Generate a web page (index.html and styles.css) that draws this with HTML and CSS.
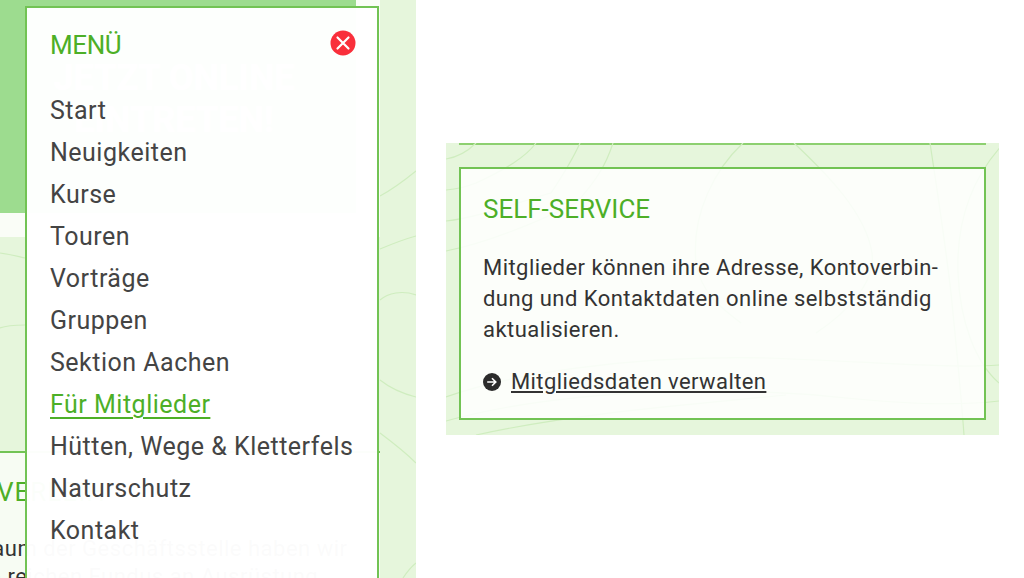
FILE: index.html
```html
<!DOCTYPE html>
<html lang="de">
<head>
    <meta charset="UTF-8">
    <meta name="viewport" content="width=device-width, initial-scale=1.0">
    <title>Self-Service</title>
    <link rel="stylesheet" href="styles.css">
</head>
<body>
    <div class="stage">
        <div class="left">
            <svg class="contours" viewBox="0 0 416 578" preserveAspectRatio="none" aria-hidden="true">
                <path d="M380 196C395 188 405 180 416 171"/>
                <path d="M380 249C392 244 405 239 416 236"/>
                <path d="M380 300C388 293 402 290 416 295"/>
                <path d="M380 380C390 388 404 394 416 397"/>
                <path d="M380 433C392 442 405 452 416 463"/>
                <path d="M403 578C407 572 411 567 416 563"/>
                <path d="M0 253C8 254 16 256 25 258"/>
                <path d="M0 328C5 326 12 325 25 325"/>
            </svg>
            <div class="hero-row">
                <div class="hero">
                    <p class="hero-text">JETZT ONLINE<br>EINTRETEN!</p>
                </div>
            </div>
            <div class="verleih">
                <h2 class="verleih-title">VERLEIH</h2>
                <p class="verleih-text">Im Raum der Geschäftsstelle haben wir<br>einen reichen Fundus an Ausrüstung</p>
            </div>
            <nav class="menu">
                <div class="menu-head">
                    <span class="menu-title">MENÜ</span>
                    <svg class="close" viewBox="0 0 26 26" aria-hidden="true">
                        <circle cx="13" cy="13" r="12.5" fill="#f92f3b"/>
                        <path d="M7.5 7.5l11 11M18.5 7.5l-11 11" stroke="#fff" stroke-width="2.2" stroke-linecap="round"/>
                    </svg>
                </div>
                <a href="#">Start</a>
                <a href="#">Neuigkeiten</a>
                <a href="#">Kurse</a>
                <a href="#">Touren</a>
                <a href="#">Vorträge</a>
                <a href="#">Gruppen</a>
                <a href="#">Sektion Aachen</a>
                <a href="#" class="active">Für Mitglieder</a>
                <a href="#">Hütten, Wege &amp; Kletterfels</a>
                <a href="#">Naturschutz</a>
                <a href="#">Kontakt</a>
            </nav>
        </div>

        <div class="right">
            <svg class="contours" viewBox="0 0 553 292" preserveAspectRatio="none" aria-hidden="true">
                <path d="M0 16C12 14 22 8 30 0"/>
                <path d="M90 0C80 14 60 26 30 40C20 44 10 46 0 47"/>
                <path d="M134 0C125 20 115 35 105 50C70 60 30 75 0 78"/>
                <path d="M167 0C160 22 150 38 130 60C90 80 40 100 0 108"/>
                <path d="M297 0C270 25 245 70 250 120C255 150 275 165 295 180"/>
                <path d="M348 0C380 30 420 70 426 110C430 140 400 170 370 190"/>
                <path d="M484 0C490 40 498 90 505 150C510 200 515 250 518 292"/>
                <path d="M558 0C530 30 510 70 512 130C514 180 530 220 553 240"/>
                <path d="M0 254C60 232 180 212 320 215C420 218 500 226 553 222"/>
                <path d="M0 278C100 250 260 240 400 255C470 262 520 262 553 258"/>
                <path d="M30 292C130 270 240 262 340 252"/>
            </svg>
            <section class="card">
                <h2 class="card-title">SELF-SERVICE</h2>
                <p class="card-text">Mitglieder können ihre Adresse, Kontoverbin-<br>dung und Kontaktdaten online selbstständig<br>aktualisieren.</p>
                <a href="#" class="card-link">
                    <svg class="arrow" viewBox="0 0 18 18" aria-hidden="true">
                        <circle cx="9" cy="9" r="9" fill="#2b2b2b"/>
                        <path d="M4.2 9h8.6M9 5.2L12.8 9 9 12.8" fill="none" stroke="#fff" stroke-width="1.6"/>
                    </svg>
                    <span>Mitgliedsdaten verwalten</span>
                </a>
            </section>
        </div>
    </div>
</body>
</html>
```

FILE: styles.css
```css
* {
    box-sizing: border-box;
}
html, body {
    margin: 0;
    height: 100%;
    overflow: hidden;
}
body {
    background-color: #fff;
    font-family: Roboto, "Liberation Sans", sans-serif;
    color: #333;
}
.stage {
    display: flex;
    height: 578px;
    overflow: hidden;
}
.contours {
    position: absolute;
    top: 0;
    left: 0;
    width: 100%;
    height: 100%;
    fill: none;
    stroke: #cfedbf;
    stroke-width: 1.2;
}

/* left page with open menu */
.left {
    position: relative;
    width: 416px;
    height: 578px;
    background-color: #e6f6dc;
    overflow: hidden;
}
.hero-row {
    position: relative;
    width: 380px;
    height: 237px;
    background-color: #fafdf7;
}
.hero {
    width: 356px;
    height: 213px;
    background-color: #9ddc8f;
    padding: 57px 8px 0 0;
}
.hero-text {
    margin: 0;
    font-size: 36px;
    line-height: 42px;
    font-weight: 700;
    color: #fff;
    text-align: center;
    white-space: nowrap;
}
.verleih {
    position: absolute;
    top: 451px;
    left: 0;
    width: 380px;
    height: 127px;
    border-top: 2px solid #72c354;
    background-color: #f7fcf3;
    padding-top: 24px;
    overflow: hidden;
}
.verleih-title {
    margin: 0 0 0 -3px;
    font-size: 26px;
    font-weight: 400;
    letter-spacing: 1px;
    color: #4daf27;
}
.verleih-text {
    margin: 28px 0 0 -54px;
    font-size: 22px;
    line-height: 28px;
    letter-spacing: .5px;
    white-space: nowrap;
}
.menu {
    position: absolute;
    top: 6px;
    left: 25px;
    width: 354px;
    height: 590px;
    border: 2px solid #72c354;
    background-color: rgba(255, 255, 255, .98);
    padding: 21px 24px 0 23px;
    display: flex;
    flex-direction: column;
}
.menu-head {
    display: flex;
    justify-content: space-between;
    align-items: center;
    height: 32px;
    margin-bottom: 29px;
    margin-right: -3px;
}
.menu-title {
    font-size: 26px;
    color: #4daf27;
    letter-spacing: -.4px;
}
.close {
    width: 26px;
    height: 26px;
    margin-bottom: 4px;
}
.menu a {
    font-size: 25px;
    line-height: 42px;
    letter-spacing: .5px;
    color: #444;
    text-decoration: none;
    white-space: nowrap;
}
.menu a.active {
    color: #4daf27;
    text-decoration: underline;
    text-decoration-thickness: 2px;
    text-underline-offset: 4px;
}

/* self service card */
.right {
    position: relative;
    width: 553px;
    height: 292px;
    margin: 143px 0 0 30px;
    background-color: #e6f6dc;
    padding: 24px 13px 15px;
}
.right::before {
    content: "";
    position: absolute;
    top: 0;
    left: 13px;
    width: 527px;
    height: 2px;
    background-color: #8dd070;
}
.card {
    position: relative;
    height: 253px;
    border: 2px solid #72c354;
    background-color: rgba(255, 255, 255, .85);
    padding: 23px 22px 0;
}
.card-title {
    margin: 0;
    font-size: 26px;
    line-height: 34px;
    font-weight: 400;
    color: #4daf27;
}
.card-text {
    margin: 26px 0 0;
    font-size: 22px;
    line-height: 31px;
    letter-spacing: .45px;
    white-space: nowrap;
}
.card-link {
    display: flex;
    align-items: center;
    gap: 10px;
    margin-top: 24px;
    font-size: 22px;
    letter-spacing: .4px;
    color: #333;
}
.arrow {
    width: 18px;
    height: 18px;
}
```
